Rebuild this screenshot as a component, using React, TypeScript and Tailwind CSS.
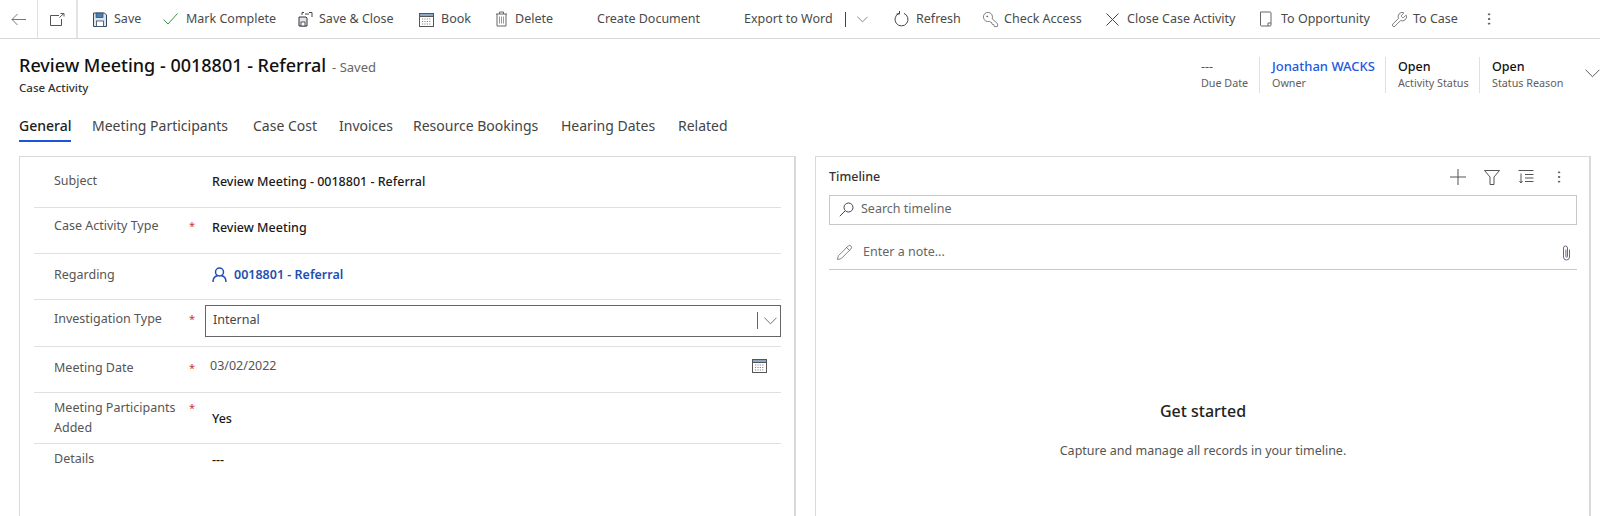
import React from "react";
import { EllipsisVertical, Pencil, Wrench, KeyRound } from "lucide-react";

function SaveIcon() {
  return (
    <svg width="14" height="15" viewBox="0 0 14 15" fill="none">
      <path d="M0.5 1h11l2 2v11.5H0.5z" fill="#dbe6f2" stroke="#33475b" />
      <rect x="3" y="1" width="7" height="4.5" fill="#4a7fb5" stroke="#33475b" strokeWidth="0.7" />
      <rect x="3.5" y="9" width="7" height="5.5" fill="#fff" stroke="#33475b" strokeWidth="0.8" />
    </svg>
  );
}

function SaveCloseIcon() {
  return (
    <svg width="15" height="16" viewBox="0 0 15 16" fill="none">
      <path d="M1 6h7l1 1v8H1z" fill="#dfe6ee" stroke="#333" />
      <rect x="3" y="11" width="4" height="4" fill="#fff" stroke="#333" strokeWidth="0.8" />
      <path d="M4 4V1.5h2M11 1.5h3V6M7 3h4" stroke="#444" />
    </svg>
  );
}

function CalendarIcon() {
  return (
    <svg width="15" height="15" viewBox="0 0 15 15" fill="none">
      <rect x="0.5" y="1.5" width="14" height="13" fill="#fff" stroke="#555" />
      <rect x="0.5" y="1.5" width="14" height="3" fill="#8ba6c4" stroke="#555" />
      <path d="M3 7h9M3 9.5h9M3 12h9" stroke="#888" strokeDasharray="1.2 1.2" />
    </svg>
  );
}

function TrashIcon() {
  return (
    <svg width="13" height="16" viewBox="0 0 13 16" fill="none" stroke="#666">
      <path d="M1 3h11M4.5 3V1h4v2M2 3v12h9V3" />
      <path d="M4.5 5.5v7M6.5 5.5v7M8.5 5.5v7" stroke="#999" />
    </svg>
  );
}

function NotebookIcon() {
  return (
    <svg width="14" height="16" viewBox="0 0 14 16" fill="none" stroke="#666">
      <path d="M1.5 1h9.5a1 1 0 0 1 1 1v12a1 1 0 0 1-1 1H2.5a1 1 0 0 1-1-1z" />
      <path d="M9 15v-3h3" />
    </svg>
  );
}

function NewWindowIcon() {
  return (
    <svg width="15" height="13" viewBox="0 0 15 13" fill="none" stroke="#555">
      <path d="M9 2.5H0.5v10h11V6" />
      <path d="M9.5 4.5L13.5 0.8M10.5 0.5h3.5v3" />
    </svg>
  );
}

function BackIcon() {
  return (
    <svg width="15" height="13" viewBox="0 0 15 13" fill="none" stroke="#777">
      <path d="M15 6.5H1M6.5 1L1 6.5 6.5 12" />
    </svg>
  );
}

function CheckIcon() {
  return (
    <svg width="15" height="12" viewBox="0 0 15 12" fill="none" stroke="#3f9142">
      <path d="M0.5 6.5L5 11 14.5 0.5" />
    </svg>
  );
}

function RefreshIcon() {
  return (
    <svg width="15" height="16" viewBox="0 0 15 16" fill="none" stroke="#444">
      <path d="M5 2.4A6.5 6.5 0 1 0 10 2.4" />
      <path d="M5.5 0v3H2.5" />
    </svg>
  );
}

function CloseIcon() {
  return (
    <svg width="13" height="13" viewBox="0 0 13 13" fill="none" stroke="#444">
      <path d="M0.5 0.5l12 12M12.5 0.5l-12 12" />
    </svg>
  );
}

function Chevron({ width }: { width: number }) {
  return (
    <svg width={width} height={Math.round(width / 2) + 1} viewBox="0 0 14 8" fill="none" stroke="#555" strokeWidth="0.9">
      <path d="M0.5 0.5L7 7l6.5-6.5" />
    </svg>
  );
}

function PlusIcon() {
  return (
    <svg width="16" height="16" viewBox="0 0 16 16" fill="none" stroke="#555">
      <path d="M0 8h16M8 0v16" />
    </svg>
  );
}

function FunnelIcon() {
  return (
    <svg width="16" height="15" viewBox="0 0 16 15" fill="none" stroke="#555">
      <path d="M0.5 0.5h15L10 7v7.5H6V7z" />
    </svg>
  );
}

function SortIcon() {
  return (
    <svg width="16" height="14" viewBox="0 0 16 14" fill="none" stroke="#555">
      <path d="M0.5 0.5h15M7 4.5h8.5M7 8h8.5M7 11.5h8.5M3 3.5v9" />
      <path d="M1.5 11L3 13l1.5-2" />
    </svg>
  );
}

function SearchIcon() {
  return (
    <svg width="15" height="15" viewBox="0 0 15 15" fill="none" stroke="#444">
      <circle cx="9.5" cy="5.5" r="4.5" />
      <path d="M6 9L0.8 14.2" />
    </svg>
  );
}

function ClipIcon() {
  return (
    <svg width="9" height="16" viewBox="0 0 9 16" fill="none" stroke="#76608a">
      <path d="M7.5 4.5V12a3 3 0 0 1-6 0V3a2 2 0 0 1 4 0v8.5a0.8 0.8 0 0 1-1.6 0V4.5" />
    </svg>
  );
}

function PersonIcon() {
  return (
    <svg width="15" height="16" viewBox="0 0 15 16" fill="none" stroke="#1f4fb0" strokeWidth="1.5">
      <circle cx="7.5" cy="5" r="4" />
      <path d="M1 15c0-4 2-6 5-6.5M14 15c0-4-2-6-5-6.5" />
    </svg>
  );
}

const commands = [
  { label: "Save", icon: <SaveIcon />, width: "w-[70px]", slot: "w-[21px]" },
  { label: "Mark Complete", icon: <CheckIcon />, width: "w-[135px]", slot: "w-[23px]" },
  { label: "Save & Close", icon: <SaveCloseIcon />, width: "w-[121px]", slot: "w-[21px]" },
  { label: "Book", icon: <CalendarIcon />, width: "w-[76px]", slot: "w-[22px]" },
  { label: "Delete", icon: <TrashIcon />, width: "w-[102px]", slot: "w-[20px]" },
  { label: "Create Document", icon: null, width: "w-[147px]", slot: "w-0" },
  { label: "Export to Word", icon: null, width: "w-[101px]", slot: "w-0" },
];

const commandsRight = [
  { label: "Refresh", icon: <RefreshIcon />, width: "w-[88px]", slot: "w-[22px]" },
  { label: "Check Access", icon: <KeyRound size={17} strokeWidth={1} className="-scale-x-100" />, width: "w-[124px]", slot: "w-[22px]" },
  { label: "Close Case Activity", icon: <CloseIcon />, width: "w-[153px]", slot: "w-[21px]" },
  { label: "To Opportunity", icon: <NotebookIcon />, width: "w-[132px]", slot: "w-[22px]" },
  { label: "To Case", icon: <Wrench size={17} strokeWidth={1} />, width: "w-[90px]", slot: "w-[22px]" },
];

function Command({ label, icon, width, slot }: { label: string; icon: React.ReactNode; width: string; slot: string }) {
  return (
    <div className={`flex items-center ${width}`}>
      <div className={`flex shrink-0 items-center ${slot}`}>{icon}</div>
      <span>{label}</span>
    </div>
  );
}

function Toolbar() {
  return (
    <div className="flex h-[39px] items-center border-b border-[#d8d8d8] text-[12.5px] text-[#4a4a4a]">
      <div className="flex h-full w-[38px] items-center justify-center border-r border-[#e0e0e0]">
        <BackIcon />
      </div>
      <div className="mr-[15px] flex h-full w-[40px] items-center justify-center border-r-2 border-[#e4e4e4]">
        <NewWindowIcon />
      </div>
      {commands.map((c) => (
        <Command key={c.label} {...c} />
      ))}
      <div className="h-[15px] w-px bg-[#444]" />
      <div className="ml-[11px] w-[37px]">
        <Chevron width={11} />
      </div>
      {commandsRight.map((c) => (
        <Command key={c.label} {...c} />
      ))}
      <EllipsisVertical size={16} strokeWidth={1.5} />
    </div>
  );
}

function HeaderField({ value, label, valueClass, width, border }: { value: string; label: string; valueClass: string; width: string; border: boolean }) {
  return (
    <div className={`flex h-[36px] flex-col justify-center ${width} ${border ? "border-l border-[#e0e0e0] pl-[12px]" : ""}`}>
      <span className={`leading-[17px] ${valueClass}`}>{value}</span>
      <span className="text-[10.75px] leading-[17px] text-[#605e5c]">{label}</span>
    </div>
  );
}

function Header() {
  return (
    <div className="flex justify-between pl-[19px]">
      <div className="pt-[14px]">
        <div className="flex items-baseline">
          <span className="text-[18px] leading-[24px] font-medium text-[#111]">Review Meeting - 0018801 - Referral</span>
          <span className="ml-[6px] text-[13px] text-[#666]">- Saved</span>
        </div>
        <div className="mt-[2px] text-[11.5px] leading-[16px] font-medium text-[#333]">Case Activity</div>
      </div>
      <div className="flex items-start pt-[18px]">
        <HeaderField value="---" label="Due Date" valueClass="text-[12.5px] text-[#555]" width="w-[58px]" border={false} />
        <HeaderField value="Jonathan WACKS" label="Owner" valueClass="text-[13px] font-medium text-[#2557e0]" width="w-[126px]" border />
        <HeaderField value="Open" label="Activity Status" valueClass="text-[12.5px] font-medium text-[#111]" width="w-[94px]" border />
        <HeaderField value="Open" label="Status Reason" valueClass="text-[12.5px] font-medium text-[#111]" width="w-[106px]" border />
        <div className="mt-[12px] w-[15px]">
          <Chevron width={15} />
        </div>
      </div>
    </div>
  );
}

const tabs = [
  { label: "General", width: "w-[73px]", active: true },
  { label: "Meeting Participants", width: "w-[161px]", active: false },
  { label: "Case Cost", width: "w-[86px]", active: false },
  { label: "Invoices", width: "w-[74px]", active: false },
  { label: "Resource Bookings", width: "w-[148px]", active: false },
  { label: "Hearing Dates", width: "w-[117px]", active: false },
  { label: "Related", width: "w-[60px]", active: false },
];

function Tabs() {
  return (
    <div className="mt-[18px] flex pl-[19px] text-[14px] text-[#444]">
      {tabs.map((t) => (
        <div key={t.label} className={`${t.width} h-[29px] pt-[2px] leading-[20px]`}>
          <span className={`inline-block h-[26px] ${t.active ? "border-b-[2px] border-[#1a56d6] font-medium text-[#222]" : ""}`}>{t.label}</span>
        </div>
      ))}
    </div>
  );
}

function Row({ label, labelPad, starPad, height, children, last }: { label: string; labelPad: string; starPad?: string; height: string; children: React.ReactNode; last?: boolean }) {
  return (
    <div className={`flex ${height} ${last ? "" : "border-b border-[#e0e0e0]"}`}>
      <div className={`w-[155px] pl-[20px] text-[12.5px] leading-[20px] text-[#555] ${labelPad}`}>{label}</div>
      <div className={`w-[16px] text-[11px] leading-[16px] text-[#d13438] ${starPad ?? ""}`}>{starPad ? "*" : ""}</div>
      <div className="flex-1">{children}</div>
    </div>
  );
}

const valueClass = "pl-[7px] text-[12.5px] leading-[20px] font-medium text-[#1a1a1a]";

function Form() {
  return (
    <div className="h-[362px] w-[777px] border-t border-r-2 border-l border-[#d9d9d9] pr-[13px] pl-[14px]">
      <Row label="Subject" labelPad="pt-[14px]" height="h-[51px]">
        <div className={`pt-[15px] ${valueClass}`}>Review Meeting - 0018801 - Referral</div>
      </Row>
      <Row label="Case Activity Type" labelPad="pt-[8px]" starPad="pt-[10px]" height="h-[46px]">
        <div className={`pt-[10px] ${valueClass}`}>Review Meeting</div>
      </Row>
      <Row label="Regarding" labelPad="pt-[11px]" height="h-[46px]">
        <div className="flex items-center gap-[7px] pt-[11px] pl-[7px] text-[12.5px] leading-[20px] font-semibold text-[#1f4fb0]">
          <PersonIcon />
          <span>0018801 - Referral</span>
        </div>
      </Row>
      <Row label="Investigation Type" labelPad="pt-[9px]" starPad="pt-[11px]" height="h-[47px]">
        <div className="mt-[5px] flex h-[32px] items-center border border-[#666] pl-[7px] text-[12.5px] text-[#444]">
          <span className="flex-1">Internal</span>
          <div className="h-[17px] w-px bg-[#666]" />
          <div className="mr-[3px] ml-[6px]">
            <Chevron width={13} />
          </div>
        </div>
      </Row>
      <Row label="Meeting Date" labelPad="pt-[11px]" starPad="pt-[13px]" height="h-[46px]">
        <div className="flex items-center justify-between pt-[9px] pr-[14px] pl-[5px] text-[12.5px] leading-[20px] text-[#555]">
          <span>03/02/2022</span>
          <CalendarIcon />
        </div>
      </Row>
      <Row label="Meeting Participants Added" labelPad="pt-[5px]" starPad="pt-[7px]" height="h-[51px]">
        <div className={`pt-[16px] ${valueClass}`}>Yes</div>
      </Row>
      <Row label="Details" labelPad="pt-[5px]" height="h-[60px]" last>
        <div className={`pt-[6px] ${valueClass}`}>---</div>
      </Row>
    </div>
  );
}

function Timeline() {
  return (
    <div className="flex h-[362px] w-[776px] flex-col border-t border-r-2 border-l border-[#d9d9d9] pr-[12px] pl-[13px]">
      <div className="flex h-[38px] items-center pt-[3px]">
        <span className="flex-1 text-[12.5px] font-medium text-[#333]">Timeline</span>
        <PlusIcon />
        <div className="ml-[18px]">
          <FunnelIcon />
        </div>
        <div className="ml-[18px]">
          <SortIcon />
        </div>
        <EllipsisVertical size={16} strokeWidth={1.5} className="mr-[10px] ml-[17px] text-[#555]" />
      </div>
      <div className="flex h-[30px] shrink-0 items-center border border-[#c8c8c8] pl-[9px] text-[12.5px] text-[#666]">
        <SearchIcon />
        <span className="ml-[7px]">Search timeline</span>
      </div>
      <div className="flex h-[45px] shrink-0 items-center border-b border-[#c8c8c8] pt-[12px] pr-[6px] pl-[7px] text-[12.5px] text-[#666]">
        <Pencil size={17} strokeWidth={1} className="text-[#555]" />
        <span className="ml-[10px] flex-1">Enter a note...</span>
        <ClipIcon />
      </div>
      <div className="mt-[130px] text-center text-[16px] leading-[22px] font-medium text-[#222]">Get started</div>
      <div className="mt-[20px] text-center text-[12.5px] leading-[18px] text-[#555]">Capture and manage all records in your timeline.</div>
    </div>
  );
}

export default function App() {
  return (
    <div className="h-[516px] w-[1600px] overflow-hidden bg-white font-['Noto_Sans',sans-serif] text-[#605e5c]">
      <Toolbar />
      <Header />
      <Tabs />
      <div className="mt-[13px] flex gap-[19px] pl-[19px]">
        <Form />
        <Timeline />
      </div>
    </div>
  );
}
